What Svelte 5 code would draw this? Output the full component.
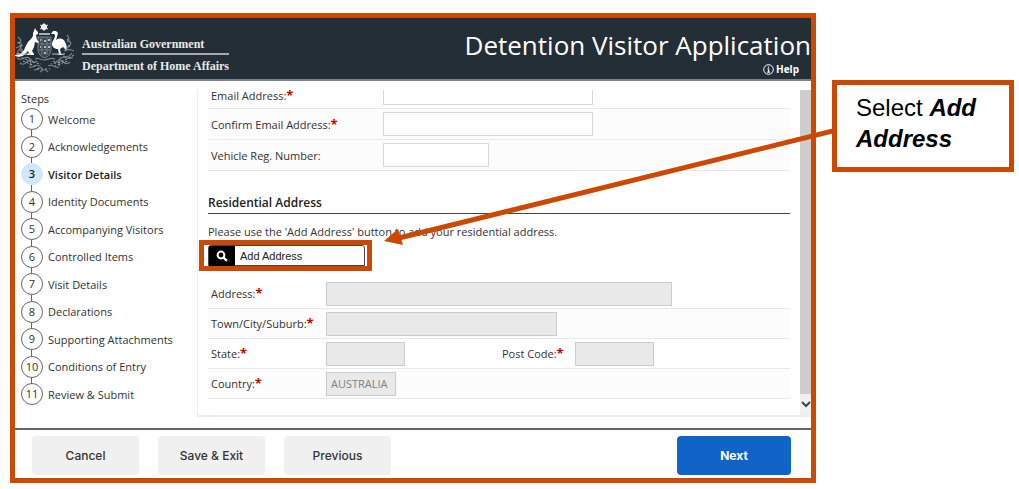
<script>
  const steps = [
    "Welcome",
    "Acknowledgements",
    "Visitor Details",
    "Identity Documents",
    "Accompanying Visitors",
    "Controlled Items",
    "Visit Details",
    "Declarations",
    "Supporting Attachments",
    "Conditions of Entry",
    "Review & Submit",
  ];

  let currentStep = $state(3);
  let email = $state("");
  let confirmEmail = $state("");
  let vehicleReg = $state("");
</script>

<div class="page">
  <div class="app">
    <header>
      <div class="brand">
        <svg class="crest" width="62" height="52" viewBox="0 0 62 52" fill="none">
          <!-- scrollwork and wattle -->
          <g stroke="#7b838a" stroke-width="1.2">
            <path d="M2 20c4-2 5 1 4 4s-4 3-3 6 5 3 7 0M3 14l3 3-2 4M1 25l7-3M5 27l5 4M52 19c3-2 2-5 0-7M50 24c4 1 5-1 6-4M49 28c4-2 7-2 10 0M52 16l4 4M48 33c4 2 7 0 9-3" />
            <path d="M2 35c5 4 8-3 12 0s4 6 8 3M5 40c3 3 6 0 8-2s4 2 2 5M58 34c-5 4-8-2-12 1s-4 6-8 3M55 39c-3 3-6 1-8-1s-4 2-2 5M14 44c4 2 7-4 11-1M19 47c3 1 5-4 8-2M44 44c-4 2-7-4-11-1M25 49c3-3 6-3 8 0M20 36c3-2 5 1 9 1s7-3 11-1" />
          </g>
          <g stroke="#a9afb4" stroke-dasharray="2 2">
            <path d="M3 33l14 6 9 2M59 32l-13 7-10 2M8 38l12 5M52 38l-12 5M22 46h13M5 22l3 7M54 22l-3 6" />
          </g>
          <!-- shield -->
          <path d="M23 14h13v12c0 5-3 8-6 9-4-1-7-4-7-9z" fill="#3b454d" stroke="#7b838a" />
          <path d="M23 21h13M27 14v18M32 14v18M24 27h11" stroke="#737b82" />
          <path d="M25 17h1M29 18h2M33 17h2M25 24h1M29 24h2M33 24h2M29 30h2" stroke="#b5babe" stroke-width="2" />
          <path d="M24 11h11" stroke="#a9afb4" stroke-width="2" />
          <!-- star -->
          <circle cx="29" cy="4" r="3" fill="#fff" />
          <path d="M29 0v8M25 2l8 4M25 6l8-4" stroke="#e4e6e8" />
          <!-- kangaroo -->
          <path d="M20 5l1 2 2 2v2l-2 1 1 5 2 2-1 1-3-1-1 5-2 4 2 3v1h-8l3-2-1-2-4 4c-3 2-6 2-9 1v-1c5 0 7-2 9-5 2-4 3-8 7-11l2-3v-3l1-2z" fill="#fff" />
          <!-- emu -->
          <path d="M36 11l2-3h3l2 2-1 4-1 3c4-3 8-1 9 2 2 3 2 6 1 8l-3-3-3 2 1 5 3 1h-7l2-1-1-5c-3 0-6-2-6-5s3-5 3-9l-1-1z" fill="#fff" />
          <path d="M37 31h13M1 31h15" stroke="#b5babe" />
        </svg>
        <div class="agency">
          <div class="government">Australian Government</div>
          <div class="department">Department of Home Affairs</div>
        </div>
      </div>
      <div class="heading">
        <h1>Detention Visitor Application</h1>
        <a class="help" href="#help">
          <svg width="11" height="11" viewBox="0 0 11 11" fill="none" stroke="currentColor">
            <circle cx="5.5" cy="5.5" r="4.8" />
            <path d="M5.5 2.4v1.4M4.4 5h1.2v3M4.2 8.1h2.7" stroke-width="1.2" />
          </svg>
          Help
        </a>
      </div>
    </header>

    <main>
      <nav aria-label="Steps">
        <div class="steps-title">Steps</div>
        <ol>
          {#each steps as step, i}
            <li class:current={currentStep === i + 1}>
              <span class="number">{i + 1}</span>
              <span>{step}</span>
            </li>
          {/each}
        </ol>
      </nav>

      <div class="panel">
        <form id="visitor">
          <div class="row contact first">
            <label for="email">Email Address:<b>*</b></label>
            <input id="email" class="wide" type="email" bind:value={email} />
          </div>
          <div class="row contact shaded">
            <label for="confirm-email">Confirm Email Address:<b>*</b></label>
            <input id="confirm-email" class="wide" type="email" bind:value={confirmEmail} />
          </div>
          <div class="row contact shaded">
            <label for="vehicle">Vehicle Reg. Number:</label>
            <input id="vehicle" class="medium" type="text" bind:value={vehicleReg} />
          </div>

          <h2>Residential Address</h2>
          <p>Please use the 'Add Address' button to add your residential address.</p>

          <div class="highlight">
            <button class="add-address" type="button">
              <span class="search">
                <svg width="12" height="12" viewBox="0 0 12 12" fill="none" stroke="#fff" stroke-width="2">
                  <circle cx="5" cy="5" r="3.4" />
                  <path d="M7.5 7.5l3.4 3.4" stroke-width="2.4" />
                </svg>
              </span>
              Add Address
            </button>
          </div>

          <div class="row">
            <label for="address">Address:<b>*</b></label>
            <input id="address" class="full" type="text" disabled />
          </div>
          <div class="row shaded">
            <label for="town">Town/City/Suburb:<b>*</b></label>
            <input id="town" class="town" type="text" disabled />
          </div>
          <div class="row">
            <label for="state">State:<b>*</b></label>
            <input id="state" class="short" type="text" disabled />
            <label class="postcode" for="postcode">Post Code:<b>*</b></label>
            <input id="postcode" class="short" type="text" disabled />
          </div>
          <div class="row shaded">
            <label for="country">Country:<b>*</b></label>
            <input id="country" class="country" type="text" value="AUSTRALIA" disabled />
          </div>
        </form>
        <div class="scrollbar">
          <div class="thumb"></div>
          <svg width="11" height="12" viewBox="0 0 11 12" fill="none" stroke="#444" stroke-width="2">
            <path d="M2 2l4 4 4-4" />
          </svg>
        </div>
      </div>
    </main>

    <footer>
      <button type="button">Cancel</button>
      <button type="button">Save &amp; Exit</button>
      <button type="button">Previous</button>
      <button type="submit" form="visitor" class="next">Next</button>
    </footer>
  </div>

  <aside>
    Select <strong>Add Address</strong>
    <svg class="arrow" width="456" height="130" viewBox="0 0 456 130">
      <path d="M456 9L18 117" stroke="#cb4903" stroke-width="5" />
      <path d="M3 120l14-12 5 16z" fill="#cb4903" />
    </svg>
  </aside>
</div>

<style>
  :global(body) {
    margin: 0;
    background: #fff;
  }

  * {
    box-sizing: border-box;
  }

  .page {
    display: flex;
    align-items: flex-start;
    gap: 16px;
    padding: 13px 5px 6px 10px;
    font-family: "Open Sans", sans-serif;
    font-size: 11px;
    color: #333;
  }

  .app {
    flex: 1;
    min-width: 0;
    border: 5px solid #cb4903;
    overflow: hidden;
  }

  header {
    display: flex;
    justify-content: space-between;
    height: 63px;
    border-bottom: 2px solid #7b838a;
    background: #242e37;
    color: #fff;
  }

  .brand {
    display: flex;
    align-items: center;
    gap: 5px;
  }

  .agency {
    padding-top: 12px;
    color: #e8eaec;
    font-family: "Liberation Serif", serif;
    font-size: 12px;
    font-weight: bold;
    line-height: 18px;
  }

  .government {
    border-bottom: 2px solid #a4a9ae;
  }

  .department {
    padding-top: 2px;
  }

  .heading {
    display: flex;
    flex-direction: column;
    align-items: flex-end;
    padding-top: 10px;
  }

  h1 {
    margin: 0;
    font-size: 26px;
    font-weight: 400;
    line-height: 34px;
    white-space: nowrap;
  }

  .help {
    display: flex;
    align-items: center;
    gap: 2px;
    padding-right: 12px;
    color: #fff;
    font-size: 10px;
    font-weight: bold;
    line-height: 14px;
    text-decoration: none;
  }

  main {
    display: flex;
    padding: 9px 0 11px;
  }

  nav {
    display: flex;
    flex-direction: column;
    width: 182px;
    padding: 0 0 12px 6px;
  }

  .steps-title {
    line-height: 18px;
  }

  ol {
    flex: 1;
    display: flex;
    flex-direction: column;
    justify-content: space-between;
    margin: 0;
    padding: 0;
    list-style: none;
  }

  li {
    position: relative;
    display: flex;
    align-items: center;
    gap: 5px;
    height: 22px;
  }

  li:not(:last-child)::after {
    content: "";
    position: absolute;
    top: 22px;
    left: 10px;
    height: 6px;
    border-left: 1px solid #666;
  }

  .number {
    width: 22px;
    height: 22px;
    border: 1px solid #666;
    border-radius: 50%;
    line-height: 20px;
    text-align: center;
  }

  .current {
    color: #222;
    font-weight: 600;
  }

  .current .number {
    border-color: #cfe9fb;
    background: #cfe9fb;
  }

  .panel {
    flex: 1;
    display: flex;
    height: 327px;
    border-left: 1px solid #e3edf8;
    border-bottom: 2px solid #e3f0f8;
    overflow: hidden;
  }

  form {
    flex: 1;
    padding: 0 10px;
  }

  .row {
    display: flex;
    align-items: center;
    height: 30px;
    padding-left: 3px;
    border-bottom: 1px solid #e9e9e9;
  }

  .row label {
    width: 115px;
  }

  .row.contact {
    height: 31px;
  }

  .row.first {
    align-items: flex-end;
    height: 19px;
    padding-bottom: 3px;
  }

  .first label {
    align-self: flex-start;
    line-height: 12px;
  }

  .contact label {
    width: 172px;
  }

  .shaded {
    background: #fcfcfc;
  }

  label b {
    color: #c00;
    font-size: 13px;
    line-height: 11px;
  }

  input {
    height: 24px;
    padding: 0 4px;
    border: 1px solid #d8d8d8;
    background: #fff;
    font: inherit;
  }

  input:disabled {
    border-color: #ccc;
    background: #e9e9e9;
    color: #80808a;
  }

  .wide {
    width: 210px;
  }

  .medium {
    width: 106px;
  }

  .full {
    width: 346px;
  }

  .town {
    width: 231px;
  }

  .short {
    width: 79px;
  }

  .country {
    width: 70px;
  }

  .row .postcode {
    width: 73px;
    margin-left: 97px;
  }

  h2 {
    margin: 22px 0 0;
    border-bottom: 1px solid #444;
    color: #222;
    font-size: 12px;
    font-weight: 600;
    line-height: 20px;
  }

  p {
    margin: 10px 0 0;
    line-height: 16px;
  }

  .highlight {
    position: relative;
    width: 157px;
    margin: 5px 0 13px;
  }

  .highlight::after {
    content: "";
    position: absolute;
    inset: -5px -7px -5px -9px;
    border: 5px solid #cb4903;
    pointer-events: none;
  }

  .add-address {
    display: flex;
    align-items: center;
    gap: 5px;
    width: 100%;
    height: 21px;
    padding: 0;
    border: 1px solid #444;
    border-radius: 3px 3px 0 0;
    background: #fff;
    color: #222;
    font-family: "Liberation Sans", sans-serif;
    font-size: 11px;
  }

  .search {
    display: flex;
    align-items: center;
    justify-content: center;
    width: 26px;
    height: 20px;
    background: #000;
  }

  .scrollbar {
    display: flex;
    flex-direction: column;
    width: 11px;
    background: #f0f0f0;
  }

  .thumb {
    flex: 1;
    background: #cdcdcd;
  }

  .scrollbar svg {
    margin: 6px 0 3px;
  }

  footer {
    display: flex;
    gap: 19px;
    padding: 6px 20px 3px 17px;
    border-top: 2px solid #666;
  }

  footer button {
    width: 107px;
    height: 39px;
    border: 0;
    border-radius: 4px;
    background: #f0f0f1;
    color: #333;
    font-family: Inter, sans-serif;
    font-size: 12px;
    font-weight: 500;
  }

  footer .next {
    width: 114px;
    margin-left: auto;
    background: #1064c8;
    color: #fff;
    font-weight: bold;
  }

  aside {
    position: relative;
    width: 182px;
    margin-top: 67px;
    padding: 7px 19px 13px;
    border: 5px solid #cb4903;
    color: #000;
    font-family: "Liberation Sans", sans-serif;
    font-size: 24px;
    line-height: 31px;
  }

  strong {
    font-style: italic;
  }

  .arrow {
    position: absolute;
    top: 36px;
    right: 100%;
    pointer-events: none;
  }
</style>
